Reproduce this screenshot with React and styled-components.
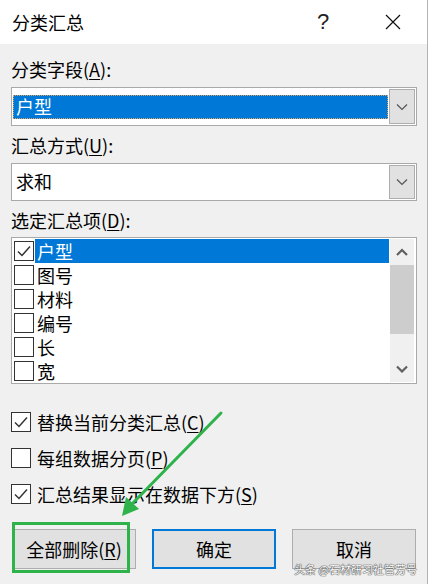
import React from "react";
import styled, { createGlobalStyle, css } from "styled-components";

const GlobalStyle = createGlobalStyle`
  html, body {
    margin: 0;
    padding: 0;
    background: #f0f0f0;
  }
  * {
    box-sizing: border-box;
  }
`;

const FONT = `"Noto Sans CJK SC", "Noto Sans", sans-serif`;

const fields = ["户型", "图号", "材料", "编号", "长", "宽"];

const Chevron = ({ up, thick }) => (
  <svg width="12" height="8" viewBox="0 0 12 8">
    <polyline
      points={up ? "1,7 6,2 11,7" : "1,1.5 6,6.5 11,1.5"}
      fill="none"
      stroke={thick ? "#606060" : "#555"}
      strokeWidth={thick ? 2.2 : 1.2}
    />
  </svg>
);

const Tick = () => (
  <svg width="18" height="18" viewBox="0 0 18 18">
    <polyline
      points="3,9.5 7,13.5 15,4.5"
      fill="none"
      stroke="#333"
      strokeWidth="1.5"
    />
  </svg>
);

const App = () => {
  return (
    <>
      <GlobalStyle />
      <Dialog>
        <TitleBar>
          <Title>分类汇总</Title>
          <HelpButton>?</HelpButton>
          <CloseButton>
            <svg width="16" height="16" viewBox="0 0 16 16">
              <path d="M1 1 L15 15 M15 1 L1 15" stroke="#111" strokeWidth="1.2" />
            </svg>
          </CloseButton>
        </TitleBar>

        <Body>
          <Label $top={12}>
            分类字段(<Key>A</Key>):
          </Label>
          <Combo $top={5} $height={39}>
            <ComboValue $selected>户型</ComboValue>
            <DropButton>
              <Chevron />
            </DropButton>
          </Combo>

          <Label $top={6}>
            汇总方式(<Key>U</Key>):
          </Label>
          <Combo $top={5} $height={38}>
            <ComboValue>求和</ComboValue>
            <DropButton>
              <Chevron />
            </DropButton>
          </Combo>

          <Label $top={6}>
            选定汇总项(<Key>D</Key>):
          </Label>
          <ListBox>
            <ListItems>
              {fields.map((name, i) => (
                <ListRow key={name}>
                  <Box $small>{i === 0 && <Tick />}</Box>
                  <ItemText $selected={i === 0}>{name}</ItemText>
                </ListRow>
              ))}
            </ListItems>
            <ScrollBar>
              <ScrollArrow>
                <Chevron up thick />
              </ScrollArrow>
              <ScrollTrack>
                <Thumb />
              </ScrollTrack>
              <ScrollArrow>
                <Chevron thick />
              </ScrollArrow>
            </ScrollBar>
          </ListBox>

          <Options>
            <OptionRow>
              <Box>
                <Tick />
              </Box>
              替换当前分类汇总(<Key>C</Key>)
            </OptionRow>
            <OptionRow>
              <Box />
              每组数据分页(<Key>P</Key>)
            </OptionRow>
            <OptionRow>
              <Box>
                <Tick />
              </Box>
              汇总结果显示在数据下方(<Key>S</Key>)
            </OptionRow>
          </Options>

          <Buttons>
            <Button>
              全部删除(<Key>R</Key>)
            </Button>
            <Button $default>确定</Button>
            <Button>取消</Button>
          </Buttons>
        </Body>

        <Highlight />
        <Arrow width="428" height="584" viewBox="0 0 428 584">
          <line x1="221" y1="413" x2="130" y2="506" stroke="#2db34a" strokeWidth="3" strokeLinecap="round" />
          <polygon points="122,516 126,497 139,509" fill="#2db34a" />
        </Arrow>
        <Watermark>头条 @石材研习社管芳号</Watermark>
      </Dialog>
    </>
  );
};

const Dialog = styled.div`
  position: relative;
  width: 428px;
  height: 584px;
  background: #f0f0f0;
  border-right: 1px solid #b4b4b4;
  font-family: ${FONT};
  color: #000;
  overflow: hidden;
`;

const TitleBar = styled.div`
  height: 44px;
  background: #ffffff;
  display: flex;
  align-items: center;
  padding-left: 12px;
`;

const Title = styled.div`
  flex: 1;
  font-size: 18px;
  line-height: 1;
`;

const HelpButton = styled.div`
  width: 20px;
  font-size: 22px;
  line-height: 1;
  text-align: center;
  margin-right: 52px;
  font-family: "Liberation Sans", sans-serif;
  color: #222;
`;

const CloseButton = styled.div`
  display: flex;
  margin-right: 26px;
`;

const Body = styled.div`
  padding: 0 10px 0 11px;
  display: flex;
  flex-direction: column;
`;

const Label = styled.div`
  margin-top: ${(p) => p.$top}px;
  height: 26px;
  line-height: 26px;
  font-size: 18px;
`;

const Key = styled.span`
  text-decoration: underline;
  text-underline-offset: 2px;
`;

const Combo = styled.div`
  margin-top: ${(p) => p.$top}px;
  height: ${(p) => p.$height}px;
  border: 1px solid #a9a9a9;
  background: #fff;
  display: flex;
  align-items: center;
  padding: 1px;
`;

const ComboValue = styled.div`
  flex: 1;
  align-self: center;
  height: 24px;
  line-height: 22px;
  font-size: 18px;
  padding-left: 3px;
  margin-right: 1px;
  ${(p) =>
    p.$selected &&
    css`
      background: #0078d7;
      color: #fff;
      outline: 1px dotted #e0a060;
      outline-offset: -1px;
    `}
`;

const DropButton = styled.div`
  width: 26px;
  align-self: stretch;
  background: #e1e1e1;
  border: 1px solid #adadad;
  display: flex;
  align-items: center;
  justify-content: center;
`;

const ListBox = styled.div`
  margin-top: 4px;
  height: 147px;
  border: 1px solid #a9a9a9;
  background: #fff;
  display: flex;
  padding: 1px 1px 0 1px;
`;

const ListItems = styled.div`
  flex: 1;
  display: flex;
  flex-direction: column;
`;

const ListRow = styled.div`
  height: 24px;
  display: flex;
  align-items: center;
  font-size: 18px;
`;

const Box = styled.div`
  width: 20px;
  height: 20px;
  flex: none;
  border: 1px solid #333;
  background: #fff;
  display: flex;
  align-items: center;
  justify-content: center;
  margin-left: ${(p) => (p.$small ? "1px" : "0")};
  margin-right: ${(p) => (p.$small ? "1px" : "6px")};
`;

const ItemText = styled.div`
  flex: 1;
  align-self: stretch;
  line-height: 24px;
  padding-left: 2px;
  ${(p) =>
    p.$selected &&
    css`
      background: #0078d7;
      color: #fff;
    `}
`;

const ScrollBar = styled.div`
  width: 24px;
  margin: 0 1px 1px 1px;
  background: #f0f0f0;
  display: flex;
  flex-direction: column;
`;

const ScrollArrow = styled.div`
  height: 26px;
  display: flex;
  align-items: center;
  justify-content: center;
`;

const ScrollTrack = styled.div`
  flex: 1;
`;

const Thumb = styled.div`
  height: 69px;
  background: #cdcdcd;
`;

const Options = styled.div`
  margin-top: 20px;
  display: flex;
  flex-direction: column;
`;

const OptionRow = styled.div`
  height: 36px;
  display: flex;
  align-items: center;
  font-size: 18px;
`;

const Buttons = styled.div`
  margin-top: 17px;
  padding-left: 1px;
  display: flex;
  gap: 16px;
`;

const Button = styled.div`
  width: 124px;
  height: 40px;
  background: #e1e1e1;
  border: ${(p) => (p.$default ? "2px solid #0078d7" : "1px solid #adadad")};
  display: flex;
  align-items: center;
  justify-content: center;
  font-size: 18px;
`;

const Highlight = styled.div`
  position: absolute;
  left: 12px;
  top: 522px;
  width: 118px;
  height: 51px;
  border: 3px solid #2db34a;
  pointer-events: none;
`;

const Arrow = styled.svg`
  position: absolute;
  left: 0;
  top: 0;
  pointer-events: none;
`;

const Watermark = styled.div`
  position: absolute;
  right: 10px;
  top: 560px;
  font-size: 11px;
  line-height: 18px;
  color: #fff;
  text-shadow: 0 0 1px #444, 0 0 1px #444, 0 0 1px #444;
`;

export default App;
